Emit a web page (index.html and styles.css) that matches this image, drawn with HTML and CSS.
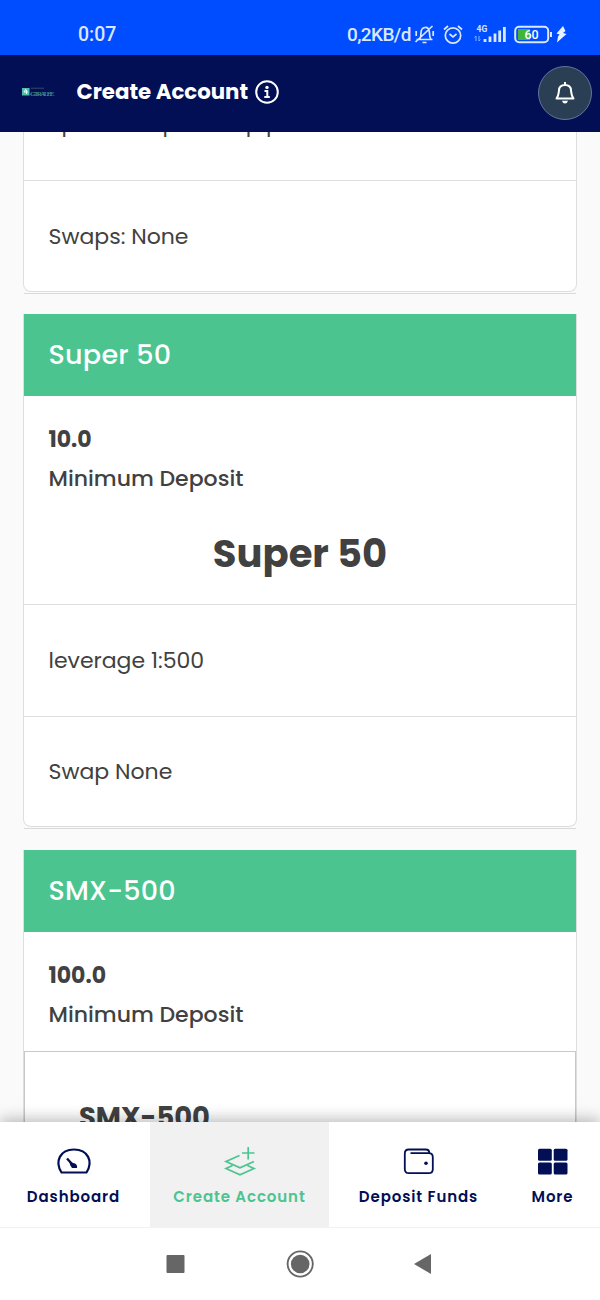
FILE: index.html
```html
<!DOCTYPE html>
<html lang="en">
<head>
<meta charset="utf-8">
<title>Create Account</title>
<link rel="stylesheet" href="styles.css">
</head>
<body>
<div class="screen">
  <div class="status">
    <span class="clock">0:07</span>
    <span class="speed">0,2KB/d</span>
    <svg class="status-icons" width="152" height="24" viewBox="414 22 152 24" fill="none" stroke="#d9e8ff" stroke-width="1.7">
      <path d="M416.500 39.500h16M419.500 39.500q1.500-2 1.500-6.500 0-5 4-5.500t4.500 5.500q0 4.500 1.500 6.500M422.500 42.500h4M432.500 26l-17 16M416.200 31v5M433.200 31v5"/>
      <circle cx="453" cy="35.500" r="7.700"/><path d="M449.500 34l3.500 3 3.500-3M444 29.500l4-3.500M458 26l4 3.500"/>
      <text class="tiny" x="476.500" y="32">4G</text>
      <path stroke="#83b4ff" stroke-width="1" d="M476 41v-5l-1.500 1.500M479 36v5l1.500-1.500"/>
      <path stroke-width="2.800" d="M485 42v-3M490 42v-5.500M495 42v-8.500M499.700 42v-11.500M504.400 42v-15"/>
      <rect x="515.200" y="26.800" width="33" height="15.400" rx="4" stroke-width="2"/>
      <path d="M518 29h12v11h-12z" fill="#42b536" stroke="none"/><path d="M551 32v5" stroke-width="2"/>
      <text class="battery" x="524.500" y="39.200">60</text>
      <path d="M563 26l-6.500 7.500 3 1-1.500 2-1 6 9.500-8.500-3.500-1 2.500-2z" fill="#e8f1ff" stroke="none"/>
    </svg>
  </div>
  <header class="header">
    <svg class="logo" width="34" height="10" viewBox="0 0 34 10">
      <rect x="0" y="1" width="7.500" height="7.500" fill="#53bdac"/>
      <path d="M4 2L2 5h4M4.500 3v4" fill="none" stroke="#e5fffa"/>
      <path d="M9 1.200h13" stroke="#526170" stroke-width=".7"/>
      <text x="8" y="8.500" textLength="24.500">GTRALEE</text>
    </svg>
    <h1 class="title">Create Account</h1>
    <svg class="info" width="24" height="24" viewBox="0 0 24 24" fill="none" stroke="#fff">
      <circle cx="12" cy="12" r="10.800" stroke-width="2"/>
      <circle cx="12" cy="7.400" r="1.700" fill="#fff" stroke="none"/>
      <path d="M9.500 11h2.800v5.500M9.300 17h5.500" stroke-width="2"/>
    </svg>
    <div class="bell">
      <svg width="20" height="22" viewBox="0 0 20 22" fill="none" stroke="#fff" stroke-width="2">
        <path d="M1.500 16.500q2-2.500 2.500-8 0-5.500 6-5.500t6 5.500q.5 5.500 2.500 8zM10 0v3" stroke-linejoin="round"/><path d="M7 18.700h6q-.7 2.800-3 2.800t-3-2.800z" fill="#fff" stroke="none"/>
      </svg>
    </div>
  </header>
  <main class="content">
    <section class="card first">
      <div class="spread">Spreads up to 1.1 pip</div>
      <div class="row"><span class="swaps">Swaps: None</span></div>
    </section>
    <section class="card">
      <h2 class="card-head">Super 50</h2>
      <div class="deposit"><b class="amount">10.0</b><span class="minimum">Minimum Deposit</span></div>
      <div class="name"><span>Super 50</span></div>
      <div class="row"><span class="leverage">leverage 1:500</span></div>
      <div class="row"><span class="swap">Swap None</span></div>
    </section>
    <section class="card open">
      <h2 class="card-head">SMX-500</h2>
      <div class="deposit"><b class="amount">100.0</b><span class="minimum">Minimum Deposit</span></div>
      <div class="inner"><span>SMX-500</span></div>
    </section>
  </main>
  <nav class="nav">
    <a class="tab dashboard">
      <svg width="34" height="32" viewBox="0 0 34 32" fill="none" stroke="#020f54" stroke-width="2.200">
        <path d="M4.500 28.500c-7-11-1.500-23 12.500-23s19.500 12 12.500 23z" stroke-linejoin="round"/><path d="M10 14.500l5 5.500" stroke-width="2.400"/><path d="M12.500 18l5.500 1.500q2.500 1 2 4.500h-5q-2.500-2.500-2.500-6z" fill="#020f54" stroke="none"/>
      </svg><span>Dashboard</span>
    </a>
    <a class="tab create">
      <svg width="34" height="32" viewBox="0 0 34 32" fill="none" stroke="#4cc490" stroke-width="1.700">
        <path d="M16.500 11.500l-13.500 6 14 6.300 14-6.300M9.500 21.500l-6.500 3 14 6.300 14-6.300-6.500-3M25.200 3v12.500M19 9h12.500"/>
      </svg><span>Create Account</span>
    </a>
    <a class="tab funds">
      <svg width="34" height="32" viewBox="0 0 34 32" fill="none" stroke="#020f54" stroke-width="1.800">
        <path d="M8.500 9.200h18.300q4 0 4 4v12q0 4-4 4h-20q-4 0-4-4v-15.700q0-4 4-4h17q3.500 0 3.500 3.500"/><circle cx="24" cy="19.300" r="1.800" fill="#020f54" stroke="none"/>
      </svg><span>Deposit Funds</span>
    </a>
    <a class="tab more">
      <svg width="34" height="32" viewBox="0 0 34 32" fill="#020f54">
        <rect x="2" y="4.800" width="13.800" height="12" rx="1.500"/><rect x="17.700" y="4.800" width="13.800" height="12" rx="1.500"/><rect x="2" y="18.400" width="13.800" height="12" rx="1.500"/><rect x="17.700" y="18.400" width="13.800" height="12" rx="1.500"/>
      </svg><span>More</span>
    </a>
  </nav>
  <div class="system">
    <svg width="260" height="30" viewBox="0 0 260 30" fill="#666">
      <rect x="1.500" y="6" width="18" height="18" rx="1"/><circle cx="135.200" cy="15" r="9.300"/><circle cx="135.200" cy="15" r="12.600" fill="none" stroke="#666" stroke-width="1.900"/><path d="M249 15l17-10v20z"/>
    </svg>
  </div>
</div>
</body>
</html>
```
FILE: styles.css
```css
* { box-sizing: border-box; }
body { margin: 0; font-family: Poppins, Inter, sans-serif; color: #414141; background: #fff; }
h1, h2 { margin: 0; }
svg { display: block; flex: none; overflow: visible; }
.screen { width: 600px; height: 1300px; display: flex; flex-direction: column; overflow: hidden; }
.status { height: 55px; background: #004cff; color: #d9e8ff; display: flex; padding: 22px 0 0 78px; font: 500 19.5px/26px Roboto, sans-serif; flex: none; }
.clock { width: 269px; }
.speed { width: 67px; white-space: nowrap; font-size: 19px; letter-spacing: -.6px; }
.tiny { font: 700 8.5px Roboto, sans-serif; fill: #d9e8ff; stroke: none; }
.battery { font: 500 12.5px Roboto, sans-serif; fill: #fff; stroke: none; }
.header { height: 77px; background: #020f54; display: flex; padding: 0 8px 0 22px; flex: none; }
.logo { margin-top: 32px; }
.logo text { font: 700 7px "Liberation Serif", serif; fill: #3d8b91; }
.title { width: 178px; margin-left: 20.5px; padding-top: 21px; font-size: 21.3px; line-height: 32px; font-weight: 700; color: #fff; white-space: nowrap; }
.info { margin: 25px 0 0 .5px; }
.bell { width: 54px; height: 54px; border: 1px solid #65749c; border-radius: 50%; background: #2a3f54; margin: 11px 0 0 auto; display: grid; place-items: center; }
.content { height: 990px; background: #fafafa; padding: 0 23px; overflow: hidden; flex: none; }
.card { position: relative; background: #fff; border: 1px solid #dedede; border-top: 0; border-radius: 0 0 8px 8px; height: 513px; margin-bottom: 22.5px; }
.card::after { content: ""; position: absolute; left: 0; right: 0; bottom: -3px; height: 1px; background: #dadada; }
.first { height: 180.5px; margin-top: -21px; }
.spread { height: 69px; padding-left: 24.5px; font-size: 22px; line-height: 26px; word-spacing: 3.3px; white-space: nowrap; }
.row { height: 111.5px; border-top: 1px solid #dedede; display: flex; align-items: center; padding-left: 24.5px; font-size: 22px; white-space: nowrap; }
.card-head { height: 82px; background: #4cc490; color: #fff; padding-left: 24.5px; font-size: 27px; line-height: 81px; font-weight: 500; letter-spacing: .25px; }
.deposit { padding: 24px 0 0 24.5px; font-size: 22px; line-height: 39px; display: flex; flex-direction: column; }
.minimum { font-weight: 500; }
.name { height: 106px; display: flex; align-items: center; justify-content: center; padding-top: 5px; font-size: 38.5px; font-weight: 700; }
.open { height: 600px; }
.inner { border: 1px solid #c9c9c9; height: 200px; margin-top: 17.5px; padding: 46px 54px; font-size: 27.4px; line-height: 39px; font-weight: 700; }
.nav { height: 106px; background: #fff; box-shadow: 0 -3px 14px #0004; display: flex; position: relative; flex: none; border-bottom: 1px solid #f1f1f1; font-size: 15px; font-weight: 600; letter-spacing: .9px; color: #020f54; }
.tab { display: flex; flex-direction: column; align-items: center; padding-top: 22px; width: 179px; white-space: nowrap; }
.tab span { margin-top: 11px; line-height: 20px; }
.dashboard { width: 150px; padding-right: 3px; }
.create { background: #f1f1f1; color: #4cc490; }
.more { width: 92px; padding-right: 3px; }
.system { height: 72px; padding: 21px 0 0 165px; background: #fff; position: relative; }
```
